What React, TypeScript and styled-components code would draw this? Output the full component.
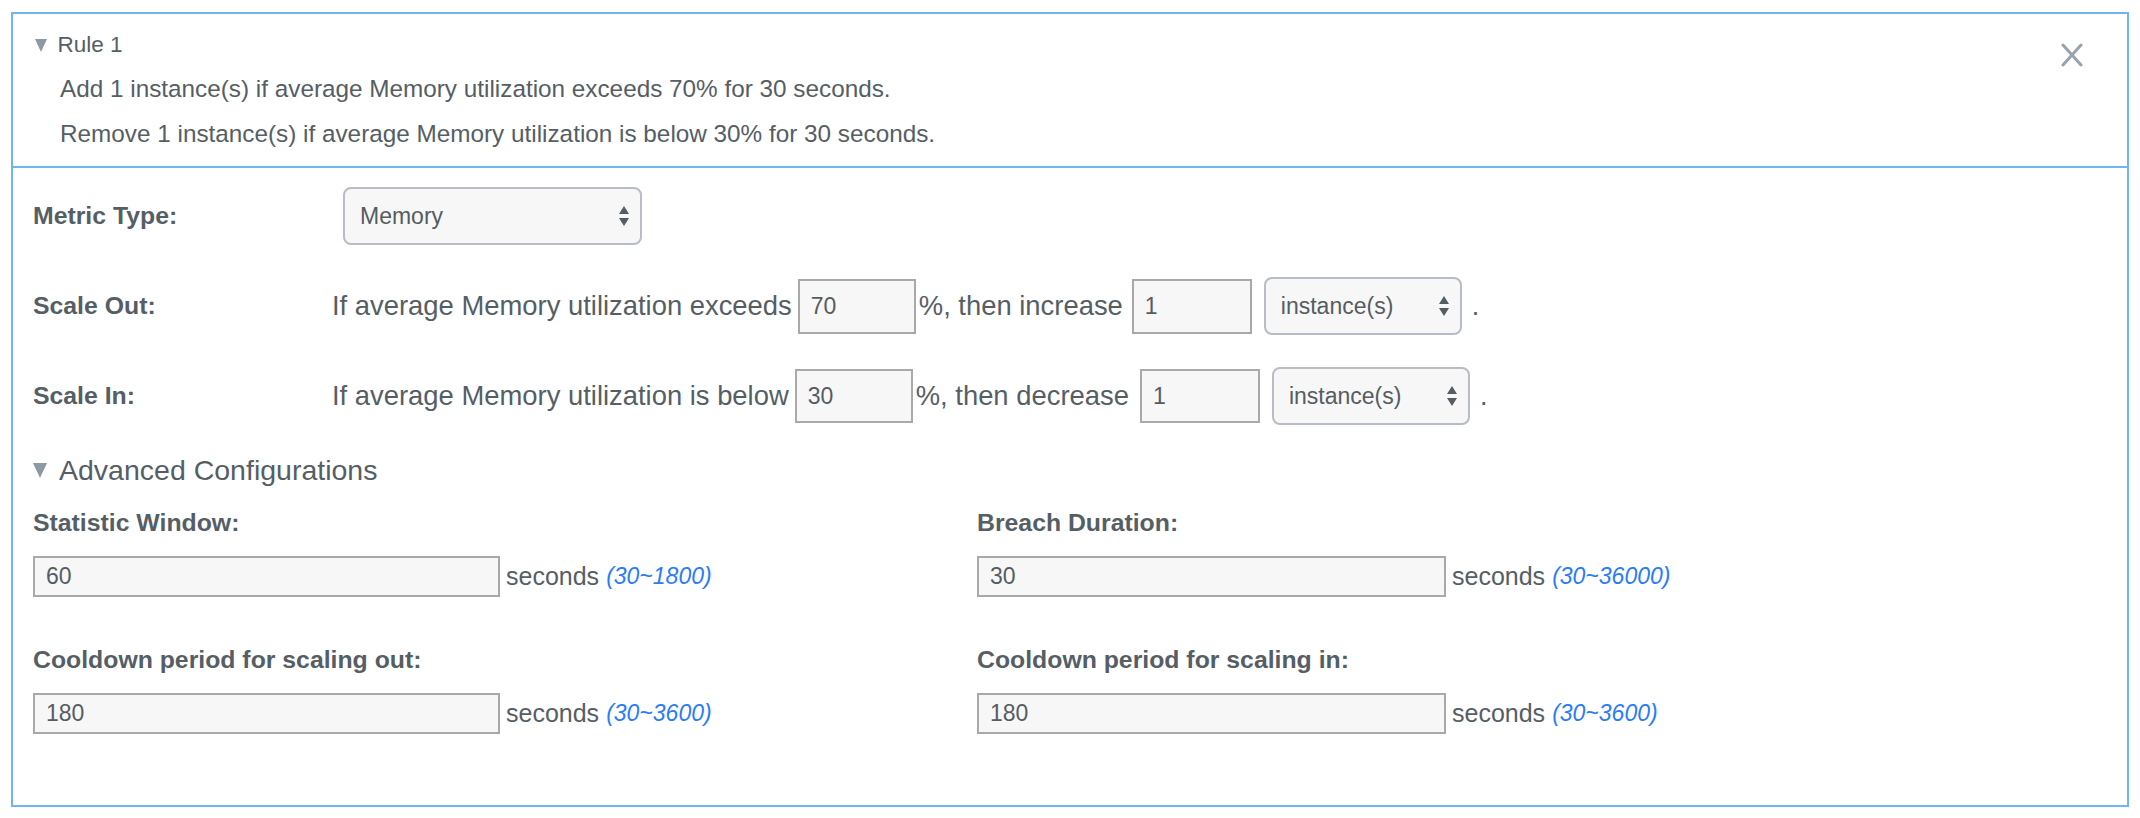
import React from "react";
import styled, { createGlobalStyle } from "styled-components";

const GlobalStyle = createGlobalStyle`
    html, body {
        margin: 0;
        padding: 0;
        background: #ffffff;
    }
    body {
        font-family: "Liberation Sans", Arial, sans-serif;
        color: #565e65;
    }
`

const Page = styled.div`
    padding: 12px 0 0 11px;
`

const Panel = styled.div`
    width: 2114px;
    border: 2px solid #6db5f3;
    background: #fff;
`

const Header = styled.div`
    display: flex;
    justify-content: space-between;
    align-items: flex-start;
    padding: 16px 44px 10px 22px;
    border-bottom: 2px solid #6db5f3;
`

const Title = styled.div`
    display: flex;
    align-items: center;
    font-size: 22.5px;
    line-height: 30px;
`

const Caret = styled.span<{ $size: number }>`
    display: inline-block;
    width: 0;
    height: 0;
    border-left: ${p => p.$size / 2}px solid transparent;
    border-right: ${p => p.$size / 2}px solid transparent;
    border-top: ${p => p.$size}px solid #8d9aa3;
    margin-right: ${p => p.$size * 0.8}px;
`

const Description = styled.div`
    margin-top: 6px;
    padding-left: 25px;
    font-size: 24.3px;
    line-height: 45px;
`

const CloseButton = styled.button`
    margin-top: 13px;
    padding: 0;
    border: none;
    background: none;
    width: 22px;
    height: 24px;
    cursor: pointer;
`

const Body = styled.div`
    padding: 19px 20px 71px;
`

const Row = styled.div`
    display: flex;
    align-items: center;
    height: 58px;
    margin-bottom: 32px;
`

const Label = styled.div`
    width: 299px;
    font-size: 24.8px;
    font-weight: bold;
`

const InlineText = styled.span`
    font-size: 27.4px;
    white-space: nowrap;
`

const SelectBox = styled.div<{ $width: number; $ml?: number }>`
    box-sizing: border-box;
    width: ${p => p.$width}px;
    height: 58px;
    margin-left: ${p => p.$ml || 0}px;
    border: 2px solid #b8bcc4;
    border-radius: 8px;
    background: #f7f7f7;
    display: flex;
    align-items: center;
    justify-content: space-between;
    padding: 0 10px 0 15px;
    font-size: 23px;
    color: #555c62;
`

const NumberInput = styled.div<{ $width: number; $height: number; $ml?: number; $mr?: number }>`
    box-sizing: border-box;
    width: ${p => p.$width}px;
    height: ${p => p.$height}px;
    margin-left: ${p => p.$ml ?? 0}px;
    margin-right: ${p => p.$mr ?? 0}px;
    border: 2px solid #a9a9a9;
    background: #f7f7f7;
    display: flex;
    align-items: center;
    padding-left: 11px;
    font-size: 23px;
    color: #555c62;
    flex-shrink: 0;
`

const Dot = styled.span`
    font-size: 27px;
    margin-left: 10px;
`

const Advanced = styled.div`
    display: flex;
    align-items: center;
    margin-top: -5px;
    font-size: 28.5px;
    line-height: 36px;
`

const Grid = styled.div`
    display: grid;
    grid-template-columns: 944px 1fr;
    row-gap: 48px;
    margin-top: 20px;
`

const Field = styled.div`
    display: flex;
    flex-direction: column;
`

const FieldLabel = styled.div`
    font-size: 24.8px;
    font-weight: bold;
    line-height: 30px;
    margin-bottom: 18px;
`

const FieldLine = styled.div`
    display: flex;
    align-items: center;
`

const Unit = styled.span`
    font-size: 25px;
    margin-left: 6px;
`

const Range = styled.span`
    font-size: 23px;
    font-style: italic;
    color: #2a7cf7;
    margin-left: 7px;
`

const Arrows = () => (
    <svg width="12" height="22" viewBox="0 0 12 22">
        <path d="M6 1 L11 9 L1 9 Z" fill="#555c62" />
        <path d="M6 21 L11 13 L1 13 Z" fill="#555c62" />
    </svg>
)

const fields = [
    { label: "Statistic Window:", value: "60", range: "(30~1800)", width: 467 },
    { label: "Breach Duration:", value: "30", range: "(30~36000)", width: 469 },
    { label: "Cooldown period for scaling out:", value: "180", range: "(30~3600)", width: 467 },
    { label: "Cooldown period for scaling in:", value: "180", range: "(30~3600)", width: 469 },
]

const App = () => {
    return (
        <>
            <GlobalStyle />
            <Page>
                <Panel>
                    <Header>
                        <div>
                            <Title>
                                <Caret $size={13} />
                                Rule 1
                            </Title>
                            <Description>
                                <div>Add 1 instance(s) if average Memory utilization exceeds 70% for 30 seconds.</div>
                                <div>Remove 1 instance(s) if average Memory utilization is below 30% for 30 seconds.</div>
                            </Description>
                        </div>
                        <CloseButton aria-label="close">
                            <svg width="22" height="24" viewBox="0 0 22 24">
                                <path d="M2 2 L20 22 M20 2 L2 22" stroke="#97a3ab" strokeWidth="3" strokeLinecap="round" />
                            </svg>
                        </CloseButton>
                    </Header>
                    <Body>
                        <Row>
                            <Label>Metric Type:</Label>
                            <SelectBox $width={299} $ml={11}>
                                Memory
                                <Arrows />
                            </SelectBox>
                        </Row>
                        <Row>
                            <Label>Scale Out:</Label>
                            <InlineText>If average Memory utilization exceeds</InlineText>
                            <NumberInput $width={118} $height={55} $ml={6} $mr={3}>70</NumberInput>
                            <InlineText>%, then increase</InlineText>
                            <NumberInput $width={120} $height={55} $ml={9}>1</NumberInput>
                            <SelectBox $width={198} $ml={12}>
                                instance(s)
                                <Arrows />
                            </SelectBox>
                            <Dot>.</Dot>
                        </Row>
                        <Row>
                            <Label>Scale In:</Label>
                            <InlineText>If average Memory utilization is below</InlineText>
                            <NumberInput $width={118} $height={54} $ml={6} $mr={3}>30</NumberInput>
                            <InlineText>%, then decrease</InlineText>
                            <NumberInput $width={120} $height={54} $ml={11}>1</NumberInput>
                            <SelectBox $width={198} $ml={12}>
                                instance(s)
                                <Arrows />
                            </SelectBox>
                            <Dot>.</Dot>
                        </Row>
                        <Advanced>
                            <Caret $size={15} />
                            Advanced Configurations
                        </Advanced>
                        <Grid>
                            {fields.map(f => (
                                <Field key={f.label}>
                                    <FieldLabel>{f.label}</FieldLabel>
                                    <FieldLine>
                                        <NumberInput $width={f.width} $height={41}>{f.value}</NumberInput>
                                        <Unit>seconds</Unit>
                                        <Range>{f.range}</Range>
                                    </FieldLine>
                                </Field>
                            ))}
                        </Grid>
                    </Body>
                </Panel>
            </Page>
        </>
    )
}

export default App
